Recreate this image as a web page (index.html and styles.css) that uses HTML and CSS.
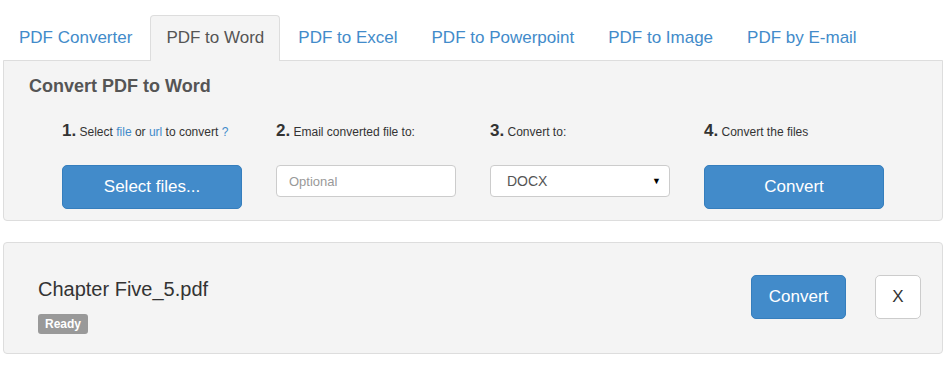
FILE: index.html
```html
<!DOCTYPE html>
<html>
	<head>
		<title>PDF to Word</title>
		<meta name="viewport" content="width=device-width, initial-scale=1.0">
		<link rel="stylesheet" href="styles.css">
	</head>
	<body>
		<div class="main">
			<ul class="tabs">
				<li><a href="#">PDF Converter</a></li>
				<li class="active"><a href="#">PDF to Word</a></li>
				<li><a href="#">PDF to Excel</a></li>
				<li><a href="#">PDF to Powerpoint</a></li>
				<li><a href="#">PDF to Image</a></li>
				<li><a href="#">PDF by E-mail</a></li>
			</ul>
			<div class="panel convert">
				<h3>Convert PDF to Word</h3>
				<div class="steps">
					<div class="step">
						<p><b>1.</b> Select <a href="#">file</a> or <a href="#">url</a> to convert <a href="#">?</a></p>
						<button class="btn blue big">Select files...</button>
					</div>
					<div class="step">
						<p><b>2.</b> Email converted file to:</p>
						<input type="text" class="field" placeholder="Optional">
					</div>
					<div class="step">
						<p><b>3.</b> Convert to:</p>
						<div class="field select"><span>DOCX</span><span class="arrow">&#9660;</span></div>
					</div>
					<div class="step">
						<p><b>4.</b> Convert the files</p>
						<button class="btn blue big">Convert</button>
					</div>
				</div>
			</div>
			<div class="panel file">
				<div class="fileinfo">
					<div class="filename">Chapter Five_5.pdf</div>
					<span class="label">Ready</span>
				</div>
				<button class="btn blue small">Convert</button>
				<button class="btn white small">X</button>
			</div>
		</div>
	</body>
</html>
```

FILE: styles.css
```css
body {
	font-family: 'Liberation Sans', Arial, sans-serif;
	margin: 0px;
	color: #333333;
	background: #ffffff;
}
a {
	color: #428bca;
	text-decoration: none;
}
.main {
	padding: 15px 7px 0px 3px;
}

.tabs {
	list-style: none;
	margin: 0px;
	padding: 0px;
	display: flex;
	position: relative;
	z-index: 1;
}
.tabs li {
	margin-right: 2px;
}
.tabs a {
	display: block;
	font-size: 17px;
	line-height: 24px;
	padding: 10px 15px 10px 15px;
	border: 1px solid transparent;
	border-bottom: none;
	border-radius: 4px 4px 0 0;
}
.tabs .active a {
	color: #555555;
	background-color: #f4f4f4;
	border-color: #dddddd;
	padding-bottom: 11px;
}

.panel {
	background-color: #f4f4f4;
	border: 1px solid #dddddd;
}
.convert {
	margin-top: -1px;
	height: 159px;
	border-radius: 0 0 4px 4px;
}
.convert h3 {
	font-size: 18px;
	color: #555555;
	margin: 14px 0px 0px 25px;
	line-height: 22px;
}
.steps {
	display: grid;
	grid-template-columns: repeat(4, 180px);
	column-gap: 34px;
	padding-left: 58px;
	margin-top: 24px;
}
.step p {
	font-size: 12px;
	margin: 0px;
	height: 20px;
	line-height: 20px;
}
.step p b {
	font-size: 17px;
}
.step .btn, .step .field {
	margin-top: 24px;
}

.btn {
	font-family: 'Liberation Sans', Arial, sans-serif;
	font-size: 17px;
	border-radius: 5px;
	cursor: pointer;
}
.blue {
	background-color: #428bca;
	border: 1px solid #357ebd;
	color: #ffffff;
}
.white {
	background-color: #ffffff;
	border: 1px solid #cccccc;
	color: #333333;
}
.big {
	width: 180px;
	height: 44px;
}
.small {
	height: 44px;
}

.field {
	box-sizing: border-box;
	width: 180px;
	height: 32px;
	border: 1px solid #cccccc;
	border-radius: 4px;
	background: #ffffff;
	font-family: 'Liberation Sans', Arial, sans-serif;
	font-size: 13px;
	padding: 0px 12px;
	display: block;
	color: #555555;
}
.field::placeholder {
	color: #999999;
}
.select {
	display: flex;
	align-items: center;
	justify-content: space-between;
	font-size: 14px;
	padding: 0px 8px 0px 16px;
}
.select .arrow {
	font-size: 9px;
	color: #000000;
}

.file {
	margin-top: 21px;
	height: 110px;
	border-radius: 4px;
	display: flex;
	align-items: center;
	padding: 0px 21px 0px 34px;
}
.fileinfo {
	flex: 1;
	margin-top: 14px;
}
.filename {
	font-size: 20px;
	line-height: 24px;
}
.label {
	display: inline-block;
	margin-top: 13px;
	background-color: #999999;
	color: #ffffff;
	font-size: 12px;
	font-weight: bold;
	padding: 3px 7px 3px 7px;
	border-radius: 3px;
}
.file .blue {
	width: 95px;
	margin-right: 29px;
	margin-top: -3px;
}
.file .white {
	width: 46px;
	margin-top: -3px;
}
```
